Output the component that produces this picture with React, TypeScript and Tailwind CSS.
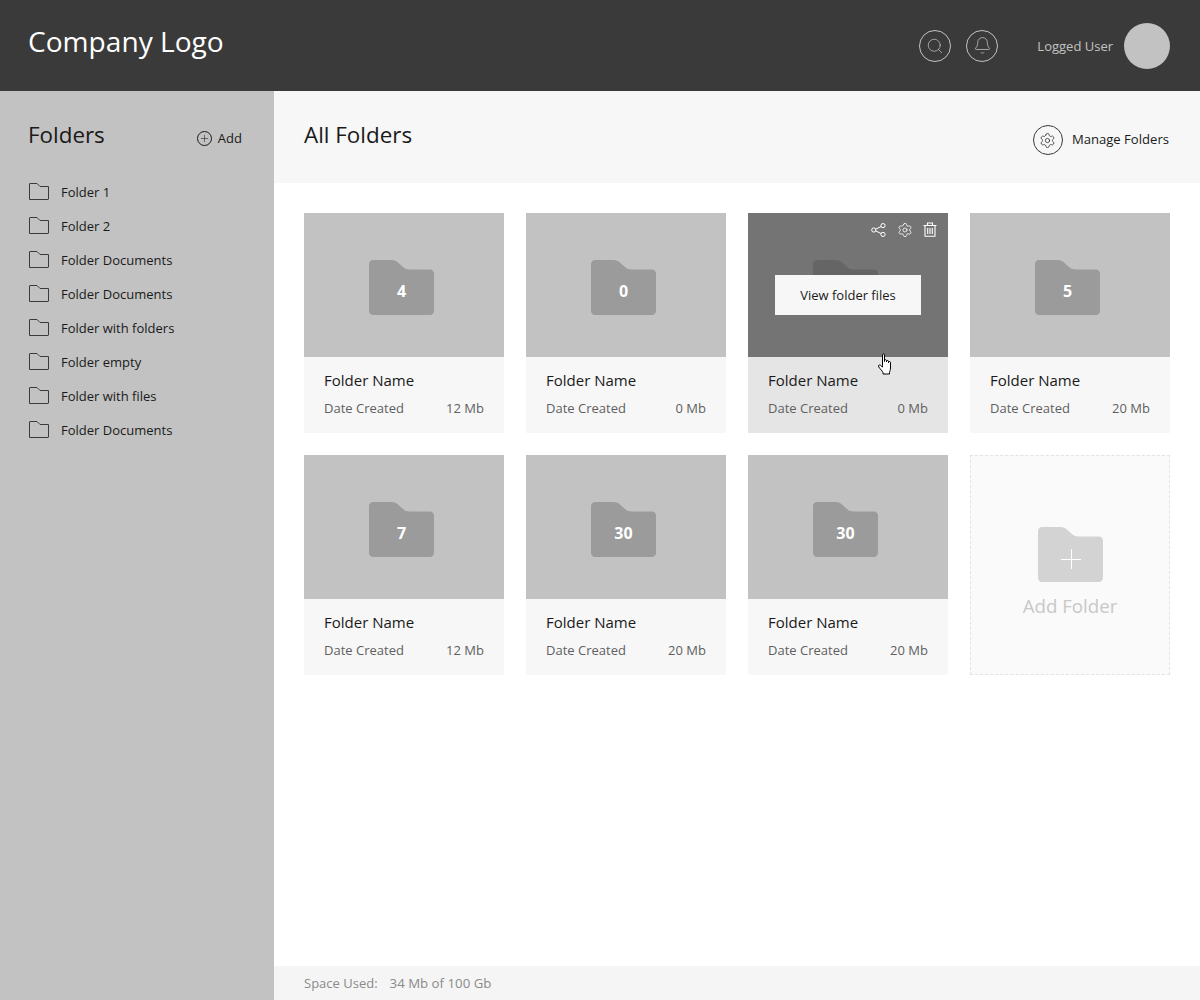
import React from "react";
import { Search, Bell, Settings, Plus } from "lucide-react";

const sidebarFolders = [
  "Folder 1",
  "Folder 2",
  "Folder Documents",
  "Folder Documents",
  "Folder with folders",
  "Folder empty",
  "Folder with files",
  "Folder Documents",
];

const cards = [
  { count: "4", size: "12 Mb" },
  { count: "0", size: "0 Mb" },
  { count: "", size: "0 Mb", hover: true },
  { count: "5", size: "20 Mb" },
  { count: "7", size: "12 Mb" },
  { count: "30", size: "20 Mb" },
  { count: "30", size: "20 Mb" },
];

// solid folder used in the cards
const FolderShape = ({ className }: { className: string }) => (
  <svg viewBox="0 0 65 55" className={className} fill="currentColor">
    <path d="M4 0H22C26 0 28 1.5 30 3.5L34 7C36 8.8 38 9.5 41 9.5H61C63.2 9.5 65 11.3 65 13.5V51C65 53.2 63.2 55 61 55H4C1.8 55 0 53.2 0 51V4C0 1.8 1.8 0 4 0Z" />
  </svg>
);

const FolderOutline = () => (
  <svg viewBox="0 0 20 17" className="w-[20px] h-[17px] shrink-0 text-[#3a3a3a]" fill="none" stroke="currentColor" strokeWidth="1">
    <path d="M0.5 16.5V1C0.5 0.7 0.7 0.5 1 0.5H8L11 3.5H19.5V16C19.5 16.3 19.3 16.5 19 16.5H0.5Z" />
  </svg>
);

const ShareIcon = () => (
  <svg viewBox="0 0 15 14" className="w-[15px] h-[14px]" fill="none" stroke="currentColor" strokeWidth="1">
    <circle cx="2.8" cy="7" r="2.1" />
    <circle cx="12" cy="2.6" r="2.1" />
    <circle cx="12" cy="11.4" r="2.1" />
    <path d="M4.7 6.1L10.1 3.5M4.7 7.9L10.1 10.5" />
  </svg>
);

const TrashIcon = () => (
  <svg viewBox="0 0 14 15" className="w-[14px] h-[15px]" fill="none" stroke="currentColor" strokeWidth="1.1">
    <path d="M0.5 3.5H13.5M4.5 3.2V1H9.5V3.2M2 3.5V14.2H12V3.5M4.7 6V12M7 6V12M9.3 6V12" />
  </svg>
);

const HandCursor = () => (
  <svg viewBox="0 0 16 22" className="w-[16px] h-[22px]" fill="#fff" stroke="#000" strokeWidth="1" strokeLinejoin="round">
    <path d="M5.5 12.5V2C5.5 0.6 7.5 0.6 7.5 2V8.5V7.5C7.5 6.4 9.5 6.4 9.5 7.5V9V8.3C9.5 7.3 11.5 7.3 11.5 8.3V9.7V9.2C11.5 8.3 13.5 8.3 13.5 9.4V15C13.5 17 12.8 18 12.5 19.5V21H6V19.5C5 17.5 3.5 16.5 1.8 14C0.8 12.5 2.3 11.3 3.5 12.3L5.5 14Z" />
  </svg>
);

const FolderCard = ({ count, size, hover }: { count: string; size: string; hover?: boolean }) => (
  <div className="w-[200px] h-[220px] flex flex-col">
    <div className={`relative h-[144px] flex items-center justify-center ${hover ? "bg-[#747474]" : "bg-[#c2c2c2]"}`}>
      <div className="relative w-[65px] h-[55px] mt-[5px] -ml-[5px]">
        <FolderShape className={`w-[65px] h-[55px] ${hover ? "text-[#656565]" : "text-[#9b9b9b]"}`} />
        <span className="absolute inset-0 flex items-center justify-center pt-[7px] text-white text-[16px] font-bold">{count}</span>
      </div>
      {hover && (
        <>
          <div className="absolute top-[10px] left-[123px] text-white"><ShareIcon /></div>
          <div className="absolute top-[9px] left-[149px] text-white"><Settings size={16} strokeWidth={1.2} /></div>
          <div className="absolute top-[9px] left-[175px] text-white"><TrashIcon /></div>
          <div className="absolute left-[27px] top-[62px] w-[146px] h-[40px] bg-[#f7f7f7] flex items-center justify-center pt-[1px] text-[13px] text-[#1a1a1a]">
            View folder files
          </div>
          <div className="absolute left-[129px] top-[140px] z-10">
            <HandCursor />
          </div>
        </>
      )}
    </div>
    <div className={`flex-1 px-[20px] pt-[13px] ${hover ? "bg-[#e5e5e5]" : "bg-[#f7f7f7]"}`}>
      <div className="text-[15px] leading-[20px] text-[#1a1a1a]">Folder Name</div>
      <div className="flex justify-between mt-[9px] text-[13px] leading-[18px] text-[#5f5f5f]">
        <span>Date Created</span>
        <span>{size}</span>
      </div>
    </div>
  </div>
);

export default function App() {
  return (
    <div className="w-[1200px] h-[1000px] flex flex-col bg-white overflow-hidden font-['Open_Sans',sans-serif]">
      <header className="h-[91px] shrink-0 bg-[#3a3a3a] flex items-center pl-[28px] pr-[30px]">
        <div className="text-[28.1px] leading-[38px] text-white -mt-[10px]">Company Logo</div>
        <div className="ml-auto flex items-center">
          <div className="w-[32px] h-[32px] rounded-full border border-[#c2c2c2] flex items-center justify-center text-[#c2c2c2]">
            <Search size={18} strokeWidth={1} />
          </div>
          <div className="w-[32px] h-[32px] ml-[15px] rounded-full border border-[#c2c2c2] flex items-center justify-center text-[#c2c2c2]">
            <Bell size={19} strokeWidth={1} />
          </div>
          <span className="ml-[39px] pt-[2px] text-[13px] text-[#c2c2c2]">Logged User</span>
          <div className="w-[46px] h-[46px] ml-[11px] rounded-full bg-[#c2c2c2]" />
        </div>
      </header>

      <div className="flex-1 flex min-h-0">
        <aside className="w-[274px] shrink-0 bg-[#c2c2c2] pl-[28px] pr-[32px] pt-[26px]">
          <div className="flex items-start justify-between h-[34px]">
            <h2 className="pt-[1px] text-[22.4px] leading-[34px] text-[#1a1a1a]">Folders</h2>
            <div className="flex items-center gap-[6px] mt-[11px] text-[13px] text-[#1a1a1a]">
              <span className="w-[15px] h-[15px] rounded-full border border-[#1a1a1a] flex items-center justify-center">
                <Plus size={11} strokeWidth={1.2} />
              </span>
              <span className="pt-[1px]">Add</span>
            </div>
          </div>
          <ul className="mt-[24px] flex flex-col">
            {sidebarFolders.map((name, i) => (
              <li key={i} className="h-[34px] flex items-center gap-[12px] text-[13px] text-[#1a1a1a]">
                <span className="pl-[1px] flex -mt-[2px]"><FolderOutline /></span>
                <span className="pt-[1px]">{name}</span>
              </li>
            ))}
          </ul>
        </aside>

        <main className="flex-1 flex flex-col min-w-0">
          <div className="h-[92px] shrink-0 bg-[#f7f7f7] flex items-start justify-between pl-[30px] pr-[31px] pt-[27px]">
            <h1 className="text-[22.4px] leading-[34px] text-[#1a1a1a]">All Folders</h1>
            <div className="flex items-center gap-[9px] mt-[7px] text-[13.1px] text-[#1a1a1a]">
              <span className="w-[30px] h-[30px] rounded-full border border-[#3a3a3a] flex items-center justify-center">
                <Settings size={17} strokeWidth={1} />
              </span>
              Manage Folders
            </div>
          </div>

          <div className="flex-1 pl-[30px] pt-[30px]">
            <div className="grid grid-cols-[repeat(4,200px)] gap-[22px]">
              {cards.map((c, i) => (
                <FolderCard key={i} count={c.count} size={c.size} hover={c.hover} />
              ))}
              <div className="w-[200px] h-[220px] bg-[#fafafa] border border-dashed border-[#e3e3e3] flex flex-col items-center pt-[71px]">
                <div className="relative w-[65px] h-[55px]">
                  <FolderShape className="w-[65px] h-[55px] text-[#d3d3d3]" />
                  <span className="absolute left-[23px] top-[22px] text-white">
                    <svg viewBox="0 0 20 20" className="w-[20px] h-[20px]" stroke="currentColor" strokeWidth="1">
                      <path d="M0 10.5H20M10.5 0V20" />
                    </svg>
                  </span>
                </div>
                <div className="mt-[11px] text-[18.7px] leading-[26px] text-[#c8c8c8]">Add Folder</div>
              </div>
            </div>
          </div>

          <footer className="h-[34px] shrink-0 bg-[#f5f5f5] flex items-center pl-[30px] pt-[1px] text-[13px] text-[#8a8a8a]">
            <span>Space Used:</span>
            <span className="ml-[12px] text-[13.25px]">34 Mb of 100 Gb</span>
          </footer>
        </main>
      </div>
    </div>
  );
}
